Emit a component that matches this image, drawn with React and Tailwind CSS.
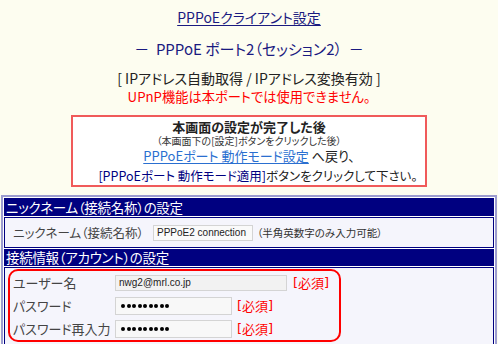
export default function App() {
  const required = (
    <span className="flex items-center whitespace-nowrap text-[13px] leading-[16px] text-[#ff0000]">
      <span className="font-['DejaVu_Sans',sans-serif] text-[13px]">[</span>
      <span>必須</span>
      <span className="font-['DejaVu_Sans',sans-serif] text-[13px]">]</span>
    </span>
  );

  // masked password: nine black discs
  const dots = (
    <span className="flex gap-[1.5px] pl-[5px]">
      {Array.from({ length: 9 }).map((_, i) => (
        <span key={i} className="h-[4px] w-[4px] rounded-full bg-black" />
      ))}
    </span>
  );

  return (
    <div className="h-[344px] overflow-hidden bg-[#fdfdf0] font-['Noto_Sans_CJK_JP',sans-serif] text-[#222] [font-feature-settings:'palt']">
      {/* Page heading */}
      <div className="pt-[7px] text-center">
        <div className="text-[14px] leading-[20px] text-[#1a1a80] underline underline-offset-2">
          PPPoEクライアント設定
        </div>
        <div className="mt-[12px] text-[15px] leading-[20px] text-[#1a1a80]">
          －&nbsp;&nbsp;PPPoE ポート2（セッション2）&nbsp;&nbsp;－
        </div>
        <div className="mt-[10px] text-[14px] leading-[18px] text-[#222]">
          [ IPアドレス自動取得 / IPアドレス変換有効 ]
        </div>
        <div className="mt-[1px] text-[13.25px] leading-[18px] text-[#ff0000]">
          UPnP機能は本ポートでは使用できません。
        </div>
      </div>

      {/* Notice box */}
      <div className="mx-auto mt-[9px] w-[356px] border-2 border-[#f05a5a] bg-white pb-[1px] pt-[2px] text-center">
        <div className="text-[13px] font-bold leading-[16px] text-[#222]">本画面の設定が完了した後</div>
        <div className="text-[10px] leading-[12px] text-[#333]">（本画面下の[設定]ボタンをクリックした後）</div>
        <div className="mt-[1px] whitespace-nowrap text-[13px] leading-[16px] text-[#222]">
          <span className="text-[#2a6fd0] underline underline-offset-2">PPPoEポート 動作モード設定</span> へ戻り、
        </div>
        <div className="mt-[4px] whitespace-nowrap pl-[18px] text-[12.5px] leading-[16px] text-[#222]">
          <span className="text-[#000080]">[PPPoEポート 動作モード適用]</span>ボタンをクリックして下さい。
        </div>
      </div>

      {/* Settings table */}
      <div className="mx-[1px] mt-[8px] flex flex-col gap-[1px] border-2 border-b-0 border-[#9c9ccf] bg-white p-[1px]">
        <div className="h-[18px] bg-[#000080] pl-[2px] text-[13.5px] leading-[18px] tracking-[-0.3px] text-white">
          ニックネーム（接続名称）の設定
        </div>
        <div className="flex h-[31px] items-center border border-[#000080] bg-[#f5f5fc] pl-[8px]">
          <span className="w-[140px] whitespace-nowrap text-[12.5px] leading-[16px] text-[#444]">ニックネーム（接続名称）</span>
          <div className="flex h-[16px] w-[100px] items-center border border-[#d4d4d4] bg-[#fafafa] pl-[3px] font-['Liberation_Sans',sans-serif] text-[10px] text-[#222]">
            PPPoE2 connection
          </div>
          <span className="ml-[4px] whitespace-nowrap text-[10.5px] leading-[14px] text-[#333]">（半角英数字のみ入力可能）</span>
        </div>
        <div className="h-[17px] bg-[#000080] pl-[2px] text-[13.5px] leading-[17px] tracking-[-0.3px] text-white">
          接続情報（アカウント）の設定
        </div>
        <div className="h-[90px] border border-[#000080] bg-[#f5f5fc] pl-[3px] pt-[1px]">
          <div className="flex w-[333px] flex-col rounded-[10px] border-2 border-[#ff0000] pl-[3px]">
            <div className="flex h-[23px] items-center">
              <span className="w-[102px] whitespace-nowrap text-[13px] leading-[16px] text-[#444]">ユーザー名</span>
              <div className="flex h-[16px] w-[172px] items-center border border-[#d4d4d4] bg-[#f2f2f2] pl-[3px] font-['Liberation_Sans',sans-serif] text-[10px] text-[#222]">
                nwg2@mrl.co.jp
              </div>
              <span className="ml-[6px]">{required}</span>
            </div>
            <div className="flex h-[23px] items-center">
              <span className="w-[102px] whitespace-nowrap text-[13px] leading-[16px] text-[#444]">パスワード</span>
              <div className="flex h-[18px] w-[117px] items-center border border-[#d4d4d4] bg-[#f8f8f8]">{dots}</div>
              <span className="ml-[5px]">{required}</span>
            </div>
            <div className="flex h-[23px] items-center">
              <span className="w-[102px] whitespace-nowrap text-[13px] leading-[16px] text-[#444]">パスワード再入力</span>
              <div className="flex h-[18px] w-[117px] items-center border border-[#d4d4d4] bg-[#f8f8f8]">{dots}</div>
              <span className="ml-[5px]">{required}</span>
            </div>
          </div>
        </div>
      </div>
    </div>
  );
}
